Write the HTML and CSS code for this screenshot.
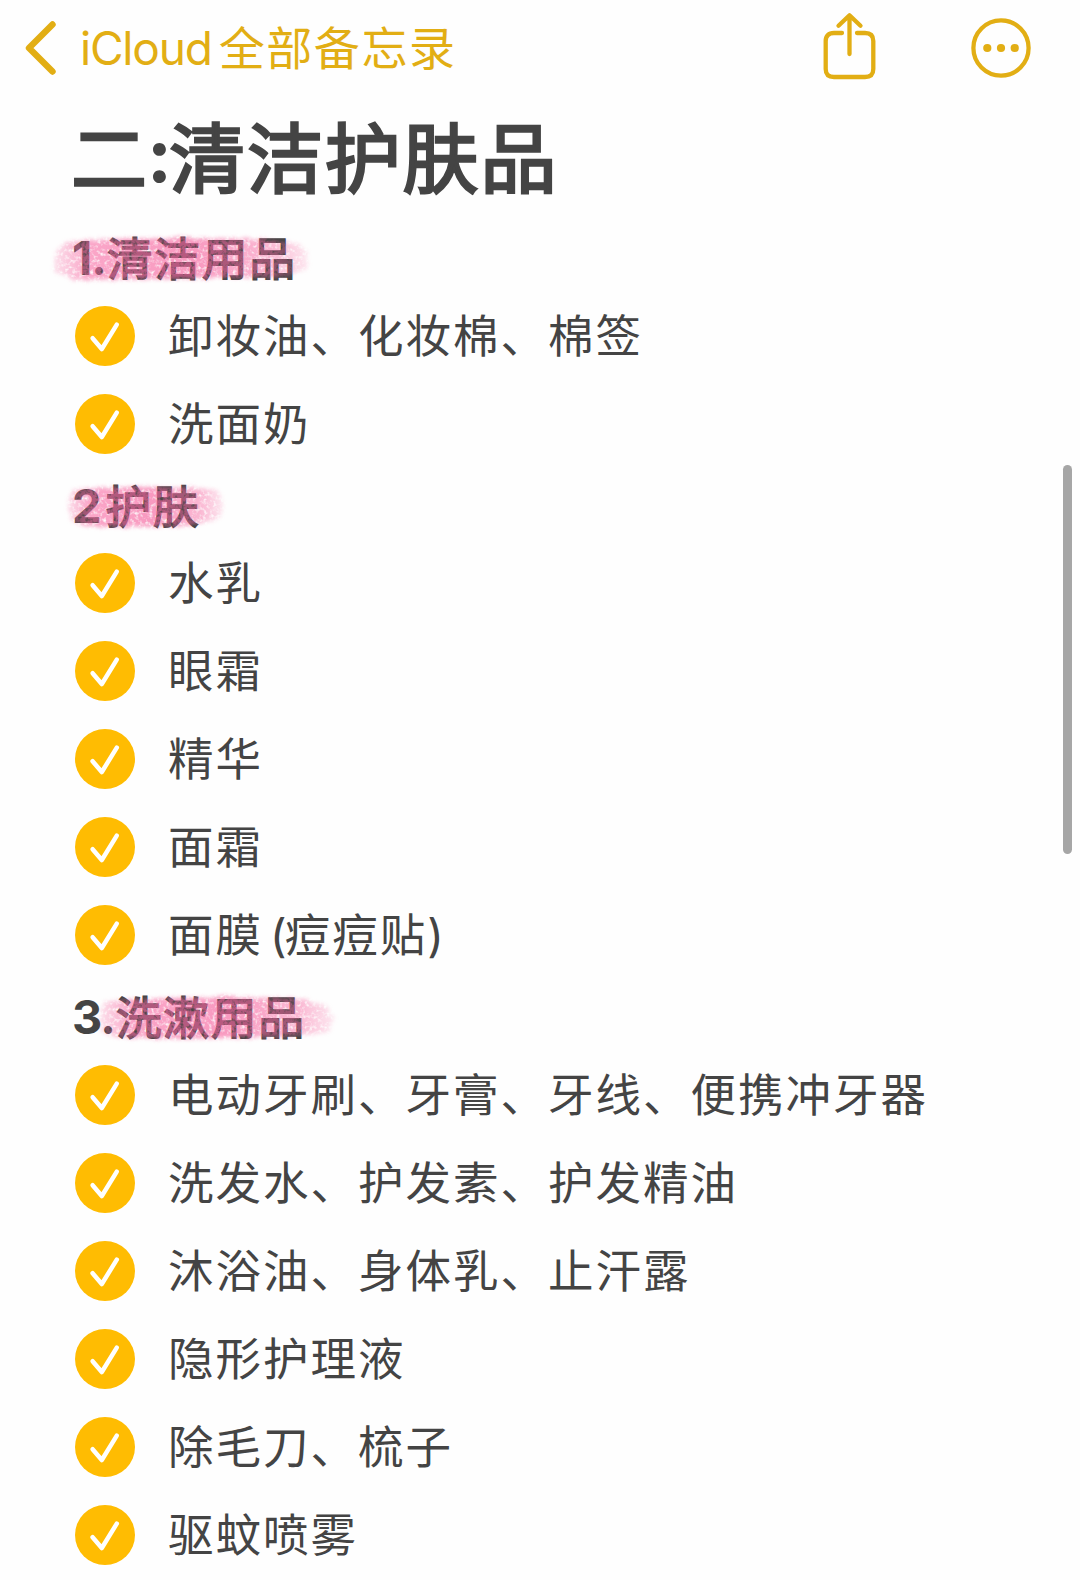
FILE: index.html
```html
<!DOCTYPE html>
<html lang="zh-CN">
<head>
    <meta charset="utf-8">
    <meta name="viewport" content="width=device-width, initial-scale=1">
    <link rel="stylesheet" href="styles.css">
    <title>iCloud全部备忘录</title>
</head>

<body>
<!-- shared shapes -->
<svg class="defs" width="0" height="0">
    <symbol id="check" viewBox="0 0 60 60">
        <circle cx="30" cy="30" r="30" fill="#ffbc02"/>
        <path d="M17.6 32.2L26.8 43L41.8 18.6" fill="none" stroke="#fff" stroke-width="4.5" stroke-linecap="round" stroke-linejoin="round"/>
    </symbol>
    <linearGradient id="ink">
        <stop offset="0" stop-color="#f76aa3" stop-opacity=".2"/>
        <stop offset=".14" stop-color="#f76aa3" stop-opacity=".6"/>
        <stop offset=".55" stop-color="#f5659f" stop-opacity=".66"/>
        <stop offset=".85" stop-color="#f76aa3" stop-opacity=".48"/>
        <stop offset="1" stop-color="#f76aa3" stop-opacity=".15"/>
    </linearGradient>
    <filter id="crayon" x="-5%" y="-10%" width="110%" height="120%" color-interpolation-filters="sRGB">
        <feTurbulence type="fractalNoise" baseFrequency=".12 .2" numOctaves="2" seed="4" result="rough"/>
        <feDisplacementMap in="SourceGraphic" in2="rough" scale="6" xChannelSelector="R" yChannelSelector="G" result="edge"/>
        <feGaussianBlur in="edge" stdDeviation="2" result="soft"/>
        <feTurbulence type="fractalNoise" baseFrequency=".28" numOctaves="2" seed="8"/>
        <feColorMatrix values="0 0 0 0 0  0 0 0 0 0  0 0 0 0 0  0 0 0 -2.4 2.15" result="grain"/>
        <feComposite in="soft" in2="grain" operator="in"/>
    </filter>
</svg>

<div class="navbar">
    <div class="back">
        <svg width="36" height="56" viewBox="0 0 36 56"><path d="M32.5 4.5L9 28L32.5 51.5"/></svg>
        <span><span class="en">iCloud</span><span class="cn">全部备忘录</span></span>
    </div>
    <div class="actions">
        <svg width="56" height="72" viewBox="0 0 56 72">
            <path d="M19 21H11Q2.7 21 2.7 29V57Q2.7 65 11 65H42Q50.3 65 50.3 57V29Q50.3 21 42 21H34"/>
            <path d="M26.5 4V42M15.5 13.8L26.5 3.2L37.5 13.8"/>
        </svg>
        <svg width="60" height="60" viewBox="0 0 60 60">
            <circle cx="30" cy="30" r="27.6"/>
            <g class="dots"><circle cx="16.3" cy="30" r="4.1"/><circle cx="30" cy="30" r="4.1"/><circle cx="43.7" cy="30" r="4.1"/></g>
        </svg>
    </div>
</div>

<div class="note">
    <h1>二<span class="colon">:</span>清洁护肤品</h1>

    <h2><span class="num">1.</span><span>清洁用品</span>
        <svg class="marker m1" width="262" height="50" viewBox="0 0 262 50"><path fill="url(#ink)" d="M14 7L60 4L150 3L210 4L247 8Q262 22 255 34L235 42L110 44L24 45Q12 42 3 34Q0 18 14 7Z"/></svg>
    </h2>
    <ul>
        <li><svg><use href="#check"/></svg><span>卸妆油、化妆棉、棉签</span></li>
        <li><svg><use href="#check"/></svg><span>洗面奶</span></li>
    </ul>

    <h2><span class="num wide">2</span><span>护肤</span>
        <svg class="marker m2" width="162" height="50" viewBox="0 0 162 50"><path fill="url(#ink)" d="M10 6L70 4L130 5L154 8Q164 22 154 36L120 43L60 44L14 43Q-5 24 10 6Z"/></svg>
    </h2>
    <ul>
        <li><svg><use href="#check"/></svg><span>水乳</span></li>
        <li><svg><use href="#check"/></svg><span>眼霜</span></li>
        <li><svg><use href="#check"/></svg><span>精华</span></li>
        <li><svg><use href="#check"/></svg><span>面霜</span></li>
        <li><svg><use href="#check"/></svg><span>面膜<span class="paren">(</span>痘痘贴)</span></li>
    </ul>

    <h2><span class="num">3.</span><span>洗漱用品</span>
        <svg class="marker m3" width="242" height="50" viewBox="0 0 242 50"><path fill="url(#ink)" d="M10 7L80 4L150 3L205 5L230 11Q246 24 232 38L190 43L80 45L12 43Q-2 26 10 7Z"/></svg>
    </h2>
    <ul>
        <li><svg><use href="#check"/></svg><span>电动牙刷、牙膏、牙线、便携冲牙器</span></li>
        <li><svg><use href="#check"/></svg><span>洗发水、护发素、护发精油</span></li>
        <li><svg><use href="#check"/></svg><span>沐浴油、身体乳、止汗露</span></li>
        <li><svg><use href="#check"/></svg><span>隐形护理液</span></li>
        <li><svg><use href="#check"/></svg><span>除毛刀、梳子</span></li>
        <li><svg><use href="#check"/></svg><span>驱蚊喷雾</span></li>
    </ul>
</div>

<div class="scrollbar"></div>
</body>
</html>
```
FILE: styles.css
```css
* {
    box-sizing: border-box;
}
body {
    position: relative;
    margin: 0;
    height: 1580px;
    overflow: hidden;
    background: #fefefe;
    color: #444;
    font-family: Inter, "Noto Sans CJK SC", sans-serif;
}
.defs {
    position: absolute;
}

/* top bar */
.navbar {
    display: flex;
    justify-content: space-between;
    align-items: center;
    height: 96px;
    padding: 0 49px 0 20px;
    color: #e2ae14;
}
.navbar svg {
    fill: none;
    stroke: #e2ae14;
    stroke-width: 4.3;
    stroke-linecap: round;
    stroke-linejoin: round;
}
.back {
    display: flex;
    align-items: center;
    gap: 24px;
    font-size: 46px;
    line-height: 60px;
    white-space: nowrap;
}
.navbar .back svg {
    stroke-width: 6.4;
}
.back .en {
    letter-spacing: -1.2px;
}
.back .cn {
    margin-left: 7px;
    letter-spacing: 1.6px;
}
.actions {
    display: flex;
    align-items: center;
    gap: 92px;
}
.navbar .dots {
    fill: #e2ae14;
    stroke: none;
}

/* note body */
.note {
    padding-left: 75px;
}
/* semibold look: regular weight with a thin outline */
h1 {
    display: flex;
    align-items: center;
    height: 124px;
    margin: 0 0 0 -4px;
    padding-bottom: 9px;
    font-size: 76px;
    font-weight: 400;
    letter-spacing: 1.8px;
    -webkit-text-stroke: 2.6px #444;
}
.colon {
    margin-left: -2px;
    font-weight: 700;
    letter-spacing: -3px;
    -webkit-text-stroke: 0;
}
h2 {
    position: relative;
    display: flex;
    align-items: center;
    height: 71.5px;
    margin: 0;
    padding-top: 1px;
    font-size: 45.5px;
    font-weight: 400;
    letter-spacing: 2px;
    -webkit-text-stroke: 1.6px #444;
}
.num {
    margin-left: -3px;
    margin-right: 1px;
    padding-top: 3px;
    font-size: 47px;
    font-weight: 700;
    letter-spacing: -1px;
    -webkit-text-stroke: 0;
}
.wide {
    margin-right: 5px;
}
ul {
    margin: 0;
    padding: 0;
    list-style: none;
}
li {
    display: flex;
    align-items: center;
    height: 88px;
    font-size: 45.5px;
    letter-spacing: 2px;
    white-space: nowrap;
}
li svg {
    width: 60px;
    height: 60px;
    margin-right: 33px;
}
li > span {
    padding-bottom: 6px;
}
.paren {
    margin-left: 7px;
    letter-spacing: -2px;
}

/* pink highlighter drawn over the headings */
.marker {
    position: absolute;
    top: 15px;
    filter: url(#crayon);
}
.m1 {
    left: -24px;
}
.m2 {
    left: -11px;
}
.m3 {
    left: 20px;
}

.scrollbar {
    position: absolute;
    top: 465px;
    right: 8px;
    width: 9px;
    height: 389px;
    border-radius: 5px;
    background: #a6a6a6;
}
```
